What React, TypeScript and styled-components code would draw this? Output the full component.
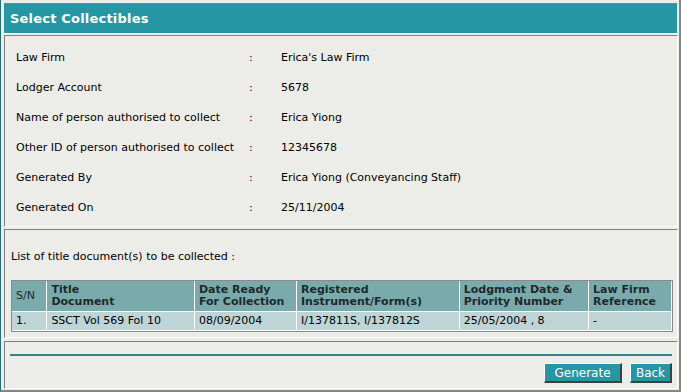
import styled, { createGlobalStyle } from "styled-components";

const GlobalStyle = createGlobalStyle`
  html, body {
    margin: 0;
    padding: 0;
    background: #ecede9;
  }
  body {
    font-family: "DejaVu Sans", Verdana, sans-serif;
    font-size: 11px;
    color: #000;
  }
`;

const details = [
  { label: "Law Firm", value: "Erica's Law Firm" },
  { label: "Lodger Account", value: "5678" },
  { label: "Name of person authorised to collect", value: "Erica Yiong" },
  { label: "Other ID of person authorised to collect", value: "12345678" },
  { label: "Generated By", value: "Erica Yiong (Conveyancing Staff)" },
  { label: "Generated On", value: "25/11/2004" },
];

const columns = [
  { title: ["S/N"], width: 35, plain: true },
  { title: ["Title", "Document"], width: 146 },
  { title: ["Date Ready", "For Collection"], width: 101 },
  { title: ["Registered", "Instrument/Form(s)"], width: 161 },
  { title: ["Lodgment Date &", "Priority Number"], width: 128 },
  { title: ["Law Firm", "Reference"], width: 82 },
];

const rows = [
  ["1.", "SSCT Vol 569 Fol 10", "08/09/2004", "I/137811S, I/137812S", "25/05/2004 , 8", "-"],
];

export default function App() {
  return (
    <>
      <GlobalStyle />
      <Frame>
        <TitleBar>Select Collectibles</TitleBar>

        <DetailsPanel>
          {details.map((d) => (
            <DetailRow key={d.label}>
              <span>{d.label}</span>
              <span>:</span>
              <span>{d.value}</span>
            </DetailRow>
          ))}
        </DetailsPanel>

        <ListPanel>
          <Caption>List of title document(s) to be collected :</Caption>
          <Table>
            <thead>
              <tr>
                {columns.map((c) => (
                  <HeadCell
                    key={c.title.join(" ")}
                    $plain={!!c.plain}
                    style={{ width: c.width }}
                  >
                    {c.title.map((line, i) => (
                      <div key={i}>{line}</div>
                    ))}
                  </HeadCell>
                ))}
              </tr>
            </thead>
            <tbody>
              {rows.map((r) => (
                <tr key={r[0]}>
                  {r.map((cell, i) => (
                    <BodyCell key={i}>{cell}</BodyCell>
                  ))}
                </tr>
              ))}
            </tbody>
          </Table>
        </ListPanel>

        <ActionPanel>
          <Rule />
          <ButtonRow>
            <Button $width={78}>Generate</Button>
            <Button $width={42}>Back</Button>
          </ButtonRow>
        </ActionPanel>
      </Frame>
    </>
  );
}

const Frame = styled.div`
  width: 681px;
  height: 392px;
  box-sizing: border-box;
  border-left: 1px solid #2b6c74;
  border-right: 2px solid #858585;
  border-bottom: 2px solid #858585;
  padding: 3px 1px 0 3px;
  display: flex;
  flex-direction: column;
`;

const TitleBar = styled.div`
  height: 29px;
  border-top: 1px solid #808080;
  border-bottom: 1px solid #ffffff;
  margin-right: 1px;
  background: #2596a3;
  color: #ffffff;
  font-weight: bold;
  font-size: 13px;
  letter-spacing: 0.2px;
  line-height: 29px;
  padding-left: 6px;
`;

const Panel = styled.div`
  border-top: 1px solid #808080;
  border-left: 1px solid #808080;
  border-bottom: 1px solid #ffffff;
  border-right: 1px solid #ffffff;
`;

const DetailsPanel = styled(Panel)`
  margin-top: 1px;
  padding: 6px 0 4px 11px;
`;

const DetailRow = styled.div`
  display: grid;
  grid-template-columns: 233px 32px 1fr;
  height: 30px;
  align-items: center;
`;

const ListPanel = styled(Panel)`
  margin-top: 2px;
  padding: 20px 0 5px 6px;
`;

const Caption = styled.div`
  line-height: 14px;
  margin-bottom: 16px;
`;

const Table = styled.table`
  width: 662px;
  border-collapse: separate;
  border-spacing: 0;
  border: 1px solid #8a8a8a;
  table-layout: fixed;
`;

const HeadCell = styled.th<{ $plain: boolean }>`
  background: #7baaad;
  color: #1c2a2b;
  font-weight: ${(p) => (p.$plain ? "normal" : "bold")};
  text-align: left;
  vertical-align: middle;
  height: 31px;
  padding: 0 4px;
  line-height: 12px;
  border-right: 1px solid #ffffff;
  border-bottom: 1px solid #ffffff;
  box-sizing: border-box;
`;

const BodyCell = styled.td`
  background: #bed4d6;
  height: 18px;
  padding: 0 4px;
  line-height: 18px;
  border-right: 1px solid #ffffff;
  border-bottom: 1px solid #ffffff;
  white-space: nowrap;
`;

const ActionPanel = styled(Panel)`
  margin-top: 3px;
  padding: 12px 5px 5px 5px;
`;

const Rule = styled.div`
  height: 2px;
  background: #3a808b;
`;

const ButtonRow = styled.div`
  display: flex;
  justify-content: flex-end;
  gap: 8px;
  margin-top: 7px;
`;

const Button = styled.button<{ $width: number }>`
  width: ${(p) => p.$width}px;
  height: 20px;
  padding: 0;
  background: #2596a3;
  color: #ffffff;
  font-family: "DejaVu Sans", Verdana, sans-serif;
  font-size: 12px;
  border-top: 1px solid #ffffff;
  border-left: 1px solid #ffffff;
  border-right: 2px solid #404040;
  border-bottom: 2px solid #404040;
  cursor: pointer;
`;
